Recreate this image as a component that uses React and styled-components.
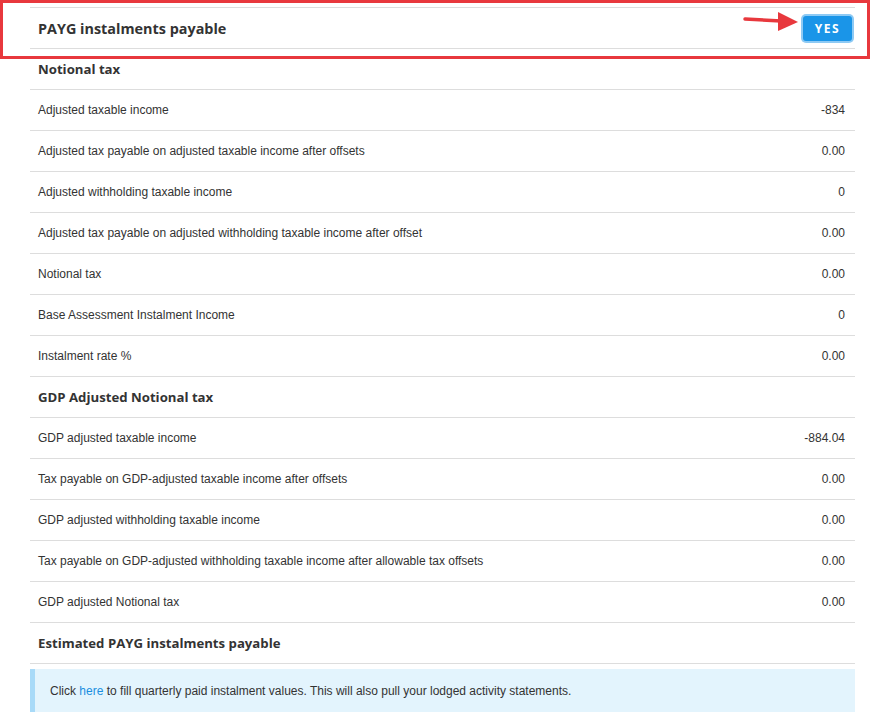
import React from 'react'
import styled, { createGlobalStyle } from 'styled-components'

const GlobalStyle = createGlobalStyle`
    body {
        margin: 0;
        background: #fff;
        font-family: "Liberation Sans", Arial, sans-serif;
        color: #333;
    }
`

const Page = styled.div`
    position: relative;
    width: 825px;
    padding: 7px 28px 0 30px;
`

const Row = styled.div`
    display: flex;
    align-items: center;
    justify-content: space-between;
    height: 40px;
    border-top: 1px solid #ddd;
    padding: 0 10px 0 8px;
    &:last-of-type {
        border-bottom: 1px solid #ddd;
    }
`

const Heading = styled.span`
    font-family: "Open Sans", sans-serif;
    font-weight: 700;
    font-size: ${props => props.size || 13.2}px;
    color: #333;
`

const Label = styled.span`
    font-size: 12px;
    color: #333;
`

const Value = styled.span`
    font-size: 12px;
    color: #333;
`

const YesButton = styled.button`
    width: 49px;
    height: 25px;
    margin-right: -7px;
    border: none;
    border-radius: 3px;
    background: #1a95e8;
    box-shadow: 0 0 0 2px #8ecaf4;
    color: #fff;
    font-family: "Open Sans", sans-serif;
    font-weight: 700;
    font-size: 12px;
    letter-spacing: 1.5px;
    cursor: pointer;
`

const Highlight = styled.div`
    position: absolute;
    left: 0;
    top: 0;
    width: 864px;
    height: 53px;
    border: 3px solid #e8383d;
    pointer-events: none;
`

const Arrow = styled.svg`
    position: absolute;
    left: 743px;
    top: 10px;
`

const Alert = styled.div`
    margin-top: 5px;
    height: 43px;
    display: flex;
    align-items: center;
    background: #e3f4fd;
    border-left: 5px solid #a8daf8;
    padding-left: 15px;
    font-size: 12px;
    color: #333;
`

const Link = styled.a`
    color: #1a8fe0;
    text-decoration: none;
`

const notional = [
    ['Adjusted taxable income', '-834'],
    ['Adjusted tax payable on adjusted taxable income after offsets', '0.00'],
    ['Adjusted withholding taxable income', '0'],
    ['Adjusted tax payable on adjusted withholding taxable income after offset', '0.00'],
    ['Notional tax', '0.00'],
    ['Base Assessment Instalment Income', '0'],
    ['Instalment rate %', '0.00'],
]

const gdp = [
    ['GDP adjusted taxable income', '-884.04'],
    ['Tax payable on GDP-adjusted taxable income after offsets', '0.00'],
    ['GDP adjusted withholding taxable income', '0.00'],
    ['Tax payable on GDP-adjusted withholding taxable income after allowable tax offsets', '0.00'],
    ['GDP adjusted Notional tax', '0.00'],
]

export default function App() {
    return (
        <Page>
            <GlobalStyle />
            <div>
                <Row>
                    <Heading size={14.4}>PAYG instalments payable</Heading>
                    <YesButton>YES</YesButton>
                </Row>
                <Row><Heading>Notional tax</Heading></Row>
                {notional.map(([l, v]) => (
                    <Row key={l}><Label>{l}</Label><Value>{v}</Value></Row>
                ))}
                <Row><Heading>GDP Adjusted Notional tax</Heading></Row>
                {gdp.map(([l, v]) => (
                    <Row key={l}><Label>{l}</Label><Value>{v}</Value></Row>
                ))}
                <Row><Heading>Estimated PAYG instalments payable</Heading></Row>
            </div>
            <Alert>
                <span>Click <Link href="#">here</Link> to fill quarterly paid instalment values. This will also pull your lodged activity statements.</span>
            </Alert>
            <Highlight />
            <Arrow width="58" height="24" viewBox="0 0 58 24">
                <line x1="2" y1="9" x2="38" y2="11" stroke="#e8383d" strokeWidth="3.5" strokeLinecap="round" />
                <polygon points="35,2 55,12 35,21" fill="#e8383d" />
            </Arrow>
        </Page>
    )
}
